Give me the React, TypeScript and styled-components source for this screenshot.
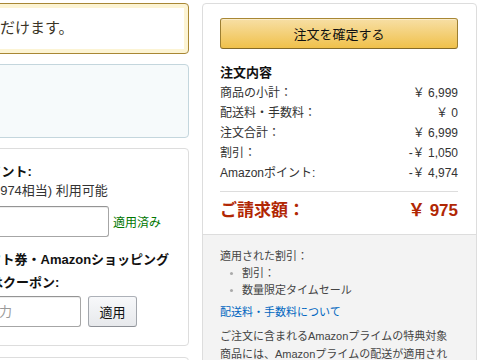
import React from "react";
import styled, { createGlobalStyle } from "styled-components";

const GlobalStyle = createGlobalStyle`
    html, body {
        margin: 0;
        padding: 0;
        background: #fff;
        overflow: hidden;
    }
    body {
        font-family: "Liberation Sans", Arial, "Noto Sans CJK JP", sans-serif;
        color: #111;
    }
`;

const Page = styled.div`
    display: flex;
    align-items: flex-start;
    gap: 13px;
    margin-left: -94px;
    padding-top: 3px;
    height: 357px;
    overflow: hidden;
`;

const LeftColumn = styled.div`
    flex: 0 0 283px;
    display: flex;
    flex-direction: column;
    gap: 10px;
`;

const Alert = styled.div`
    box-sizing: border-box;
    height: 51px;
    border: 1px solid #a88734;
    border-radius: 4px;
    box-shadow: inset 0 0 0 4px #fcf4d4;
    padding: 0 18px 4px;
    display: flex;
    align-items: center;
    font-size: 15px;
    color: #3a3426;
    white-space: nowrap;
`;

const InfoBox = styled.div`
    height: 74px;
    box-sizing: border-box;
    border: 1px solid #c4d6dd;
    border-radius: 4px;
    background: #f6fafb;
`;

const Card = styled.div`
    border: 1px solid #ddd;
    border-radius: 4px;
    padding: 13px 18px 18px;
    white-space: nowrap;
`;

const NextCard = styled.div`
    height: 40px;
    margin-top: 1px;
    border: 1px solid #ddd;
    border-radius: 4px;
`;

const Label = styled.div<{ $lh?: number; $top?: number }>`
    margin-top: ${p => p.$top ?? 0}px;
    font-size: 13px;
    font-weight: 700;
    line-height: ${p => p.$lh ?? 19}px;
    color: #111;
`;

const Note = styled.div`
    font-size: 13px;
    line-height: 19px;
    color: #333;
`;

const FieldRow = styled.div<{ $top: number }>`
    display: flex;
    align-items: center;
    gap: 4px;
    margin-top: ${p => p.$top}px;
`;

const TextInput = styled.input<{ $w: number }>`
    box-sizing: border-box;
    width: ${p => p.$w}px;
    height: 31px;
    border: 1px solid #a6a6a6;
    border-top-color: #949494;
    border-radius: 3px;
    box-shadow: 0 1px 0 rgba(0,0,0,0.07) inset;
    padding: 0 8px;
    font: inherit;
    font-size: 13px;
    outline: none;

    &::placeholder {
        color: #999;
    }
`;

const Applied = styled.span`
    font-size: 12px;
    color: #007600;
`;

const GreyButton = styled.button`
    box-sizing: border-box;
    height: 31px;
    width: 49px;
    margin-left: 3px;
    border: 1px solid #adb1b8;
    border-color: #adb1b8 #a2a6ac #8d9096;
    border-radius: 3px;
    background: linear-gradient(to bottom, #f7f8fa, #e7e9ec);
    font: inherit;
    font-size: 13px;
    color: #111;
    padding: 0;
`;

const Summary = styled.div`
    flex: 0 0 275px;
    box-sizing: border-box;
    border: 1px solid #ddd;
    border-radius: 4px;
    overflow: hidden;
    height: 380px;
`;

const SummaryTop = styled.div`
    padding: 14px 18px 11px 17px;
`;

const PlaceOrder = styled.button`
    display: block;
    box-sizing: border-box;
    width: 100%;
    height: 31px;
    border: 1px solid #a88734;
    border-color: #a88734 #9c7e31 #846a29;
    border-radius: 3px;
    background: linear-gradient(to bottom, #f7dfa5, #f0c14b);
    box-shadow: inset 0 1px 0 rgba(255,255,255,0.4);
    font: inherit;
    font-size: 13px;
    color: #111;
    padding: 0;
`;

const Heading = styled.div`
    margin-top: 14px;
    font-size: 13px;
    font-weight: 700;
    line-height: 20px;
    color: #111;
`;

const Row = styled.div`
    display: flex;
    justify-content: space-between;
    font-size: 12px;
    line-height: 20px;
    color: #333;
`;

const Divider = styled.hr`
    border: 0;
    border-top: 1px solid #ddd;
    margin: 8px 0 7px;
`;

const TotalRow = styled.div`
    display: flex;
    justify-content: space-between;
    font-size: 17px;
    font-weight: 700;
    line-height: 24px;
    color: #b12704;
`;

const SummaryBottom = styled.div`
    background: #f3f3f3;
    border-top: 1px solid #ddd;
    padding: 13px 18px 0 17px;
    font-size: 11px;
    line-height: 17px;
    color: #444;
`;

const BulletList = styled.ul`
    list-style: none;
    margin: 0;
    padding: 0 0 0 22px;
`;

const Bullet = styled.li`
    position: relative;

    &::before {
        content: "";
        position: absolute;
        left: -12px;
        top: 7px;
        width: 3px;
        height: 3px;
        border-radius: 50%;
        background: #aaa;
    }
`;

const InfoLink = styled.a`
    display: block;
    margin-top: 5px;
    color: #0066c0;
    text-decoration: none;
`;

const Paragraph = styled.p`
    margin: 6px 0 0;
    line-height: 18px;
`;

const rows: [string, string][] = [
    ["商品の小計：", "￥ 6,999"],
    ["配送料・手数料：", "￥ 0"],
    ["注文合計：", "￥ 6,999"],
    ["割引：", "-￥ 1,050"],
    ["Amazonポイント:", "-￥ 4,974"],
];

export default function App() {
    return (
        <>
            <GlobalStyle />
            <Page>
                <LeftColumn>
                    <Alert>ご利用いただけます。</Alert>
                    <InfoBox />
                    <Card>
                        <Label>Amazonポイント:</Label>
                        <Note>4,974pt (￥4,974相当) 利用可能</Note>
                        <FieldRow $top={6}>
                            <TextInput $w={184} defaultValue="" />
                            <Applied>適用済み</Applied>
                        </FieldRow>
                        <Label $lh={23} $top={11}>
                            Amazonギフト券・Amazonショッピング
                            <br />
                            カードまたはクーポン:
                        </Label>
                        <FieldRow $top={2}>
                            <TextInput $w={156} placeholder="コードを入力" />
                            <GreyButton>適用</GreyButton>
                        </FieldRow>
                    </Card>
                    <NextCard />
                </LeftColumn>
                <Summary>
                    <SummaryTop>
                        <PlaceOrder>注文を確定する</PlaceOrder>
                        <Heading>注文内容</Heading>
                        {rows.map(([label, value]) => (
                            <Row key={label}>
                                <span>{label}</span>
                                <span>{value}</span>
                            </Row>
                        ))}
                        <Divider />
                        <TotalRow>
                            <span>ご請求額：</span>
                            <span>￥ 975</span>
                        </TotalRow>
                    </SummaryTop>
                    <SummaryBottom>
                        <div>適用された割引：</div>
                        <BulletList>
                            <Bullet>割引：</Bullet>
                            <Bullet>数量限定タイムセール</Bullet>
                        </BulletList>
                        <InfoLink href="#">配送料・手数料について</InfoLink>
                        <Paragraph>
                            ご注文に含まれるAmazonプライムの特典対象商品には、Amazonプライムの配送が適用されます。
                        </Paragraph>
                    </SummaryBottom>
                </Summary>
            </Page>
        </>
    );
}
